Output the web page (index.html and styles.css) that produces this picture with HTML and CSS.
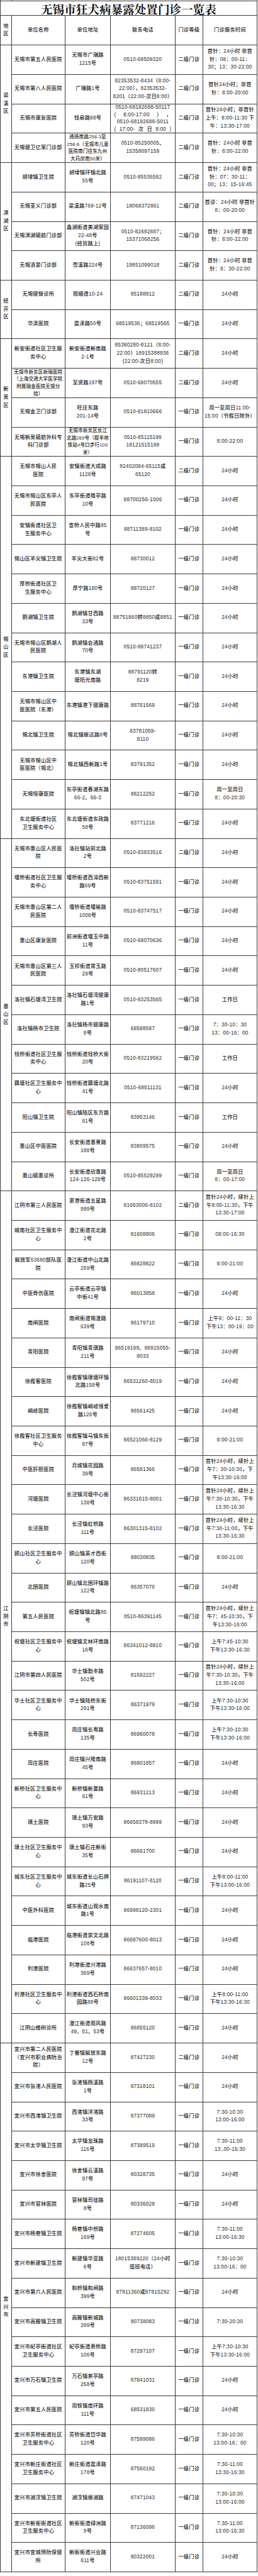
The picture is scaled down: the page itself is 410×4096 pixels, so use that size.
FILE: index.html
```html
<!DOCTYPE html>
<html lang="zh-CN">
<head>
<meta charset="utf-8">
<title>无锡市狂犬病暴露处置门诊一览表</title>
<link rel="stylesheet" href="styles.css">
</head>
<body>
<div class="tbl">
<div class="s"></div><div class="s n"></div><div class="s"></div><div class="s"></div><div class="s n"></div><div class="s"></div>
<div class="title">无锡市狂犬病暴露处置门诊一览表</div>
<div class="c rg">地<br>区</div><div class="c">单位名称</div><div class="c">单位地址</div><div class="c">联系电话</div><div class="c">门诊等级</div><div class="c">门诊服务时间</div>

<div class="c rg r4">梁<br>溪<br>区</div>
<div class="c">无锡市第五人民医院</div><div class="c">无锡市广瑞路<br>1215号</div><div class="c">0510-68509320</div><div class="c">二级门诊</div><div class="c">首针：24小时 非首<br>针：08：00-11：<br>30；13：30-22:00</div>
<div class="c">无锡市第八人民医院</div><div class="c">广瑞路1号</div><div class="c">82353532-8434（8:00-<br>22:00），82353532-<br>8201（22:00-次日8:00）</div><div class="c">二级门诊</div><div class="c">首针24小时；非首<br>针：8:00-20:00</div>
<div class="c">无锡市康复医院</div><div class="c">钱皋路88号</div><div class="c"><div class="ph4"><span class="ln">0510-68182688-50117</span><span class="ln j"><i>(</i><i>8:00-17:00</i><i>)</i><i>，</i></span><span class="ln">0510-68182688-5011</span><span class="ln j"><i>(</i><i>17:00-</i><i>次</i><i>日</i><i>8:00</i><i>)</i></span></div></div><div class="c">二级门诊</div><div class="c">首针24小时；非首针<br>上午：8:00-11:30 下<br>午：13:30-17:00</div>
<div class="c">无锡健卫亿家门诊部</div><div class="c sm">通扬南路258-3至<br>258-6（无锡市儿童<br>医院南门往东九州<br>大药房南50米）</div><div class="c">0510-85250005、<br>15358097159</div><div class="c">二级门诊</div><div class="c">首针：24小时 非首<br>针：8:00-22:00</div>

<div class="c rg r4">滨<br>湖<br>区</div>
<div class="c">胡埭镇卫生院</div><div class="c">胡埭镇环镇北路<br>55号</div><div class="c">0510-85536582</div><div class="c">二级门诊</div><div class="c">首针：24小时 非首<br>针：07：30-11：<br>00；13：15-16:45</div>
<div class="c">无锡荃义门诊部</div><div class="c">梁溪路769-12号</div><div class="c">18068372861</div><div class="c">二级门诊</div><div class="c">首诊：24小时 非首针<br>8：00-20:00</div>
<div class="c">无锡滨湖毓舫门诊部</div><div class="c">蠡湖街道美湖家园<br>22-48号<br>(经贸路上)</div><div class="c">0510-82692887；<br>15371068256</div><div class="c">二级门诊</div><div class="c">首针：24小时 非首<br>针：8:00-22:00</div>
<div class="c">无锡清晏门诊部</div><div class="c">雪溪路224号</div><div class="c">19851099018</div><div class="c">二级门诊</div><div class="c">首针：24小时 非首<br>针：8：30-22:00</div>

<div class="c rg r2">经<br>开<br>区</div>
<div class="c">无锡健慷诊所</div><div class="c">观顺道10-24</div><div class="c">85188812</div><div class="c">二级门诊</div><div class="c">24小时</div>
<div class="c">华清医院</div><div class="c">震泽路50号</div><div class="c">68519536；68519565</div><div class="c">一级门诊</div><div class="c">24小时</div>

<div class="c rg r4">新<br>吴<br>区</div>
<div class="c">新安街道社区卫生服<br>务中心</div><div class="c">新安街道新南路<br>2-1号</div><div class="c">85380280-8121（8:00-<br>22:00）18915388936<br>(22:00-次日8:00)</div><div class="c">二级门诊</div><div class="c">24小时</div>
<div class="c sm">无锡市新吴区新瑞医院<br>（上海交通大学医学院<br>附属瑞金医院无锡分<br>院）</div><div class="c">至贤路197号</div><div class="c">0510-68070555</div><div class="c">二级门诊</div><div class="c">24小时</div>
<div class="c">无锡金卫门诊部</div><div class="c">旺庄东路<br>201-14号</div><div class="c">0510-81810666</div><div class="c">一级门诊</div><div class="c">周一至周日11:00-<br>15:00（节假日除外）</div>
<div class="c">无锡新吴毓舫外科专<br>科门诊部</div><div class="c sm">无锡市新吴区长江<br>北路269号（叙丰地<br>铁站4号口步行100<br>米）</div><div class="c">0510-85115199<br>18121515199</div><div class="c">一级门诊</div><div class="c">8:00-22:00</div>

<div class="c rg r13">锡<br>山<br>区</div>
<div class="c">无锡市锡山人民<br>医院</div><div class="c">安镇街道大成路<br>1128号</div><div class="c">82402084-65115或<br>65120</div><div class="c">二级门诊</div><div class="c">24小时</div>
<div class="c">无锡市锡山区东亭人<br>民医院</div><div class="c">东亭街道隆亭路<br>10号</div><div class="c">88700256-1006</div><div class="c">一级门诊</div><div class="c">24小时</div>
<div class="c">安镇街道社区卫<br>生服务中心</div><div class="c">查桥人民中路85<br>号</div><div class="c">88711389-8102</div><div class="c">一级门诊</div><div class="c">24小时</div>
<div class="c">锡山区羊尖镇卫生院</div><div class="c">羊尖大街82号</div><div class="c">88730012</div><div class="c">一级门诊</div><div class="c">24小时</div>
<div class="c">厚桥街道社区卫<br>生服务中心</div><div class="c">厚宁路180号</div><div class="c">88720127</div><div class="c">一级门诊</div><div class="c">24小时</div>
<div class="c">鹅湖镇卫生院</div><div class="c">鹅湖镇甘西路<br>33号</div><div class="c">88751860转8850或8851</div><div class="c">一级门诊</div><div class="c">24小时</div>
<div class="c">无锡市锡山区鹅湖人<br>民医院</div><div class="c">鹅湖镇会通路<br>70号</div><div class="c">0510-88741237</div><div class="c">一级门诊</div><div class="c">24小时</div>
<div class="c">东港镇卫生院</div><div class="c">东港镇东湖<br>塘阳光南路</div><div class="c">88791120转<br>8219</div><div class="c">一级门诊</div><div class="c">24小时</div>
<div class="c">无锡市锡山区中<br>医医院（东港）</div><div class="c">东港镇港下健康路</div><div class="c">88761569</div><div class="c">一级门诊</div><div class="c">24小时</div>
<div class="c">锡北镇卫生院</div><div class="c">锡北镇振达路8号</div><div class="c">83781059-<br>8110</div><div class="c">一级门诊</div><div class="c">24小时</div>
<div class="c">无锡市锡山区中<br>医医院（锡北）</div><div class="c">锡北镇西新路1号</div><div class="c">83791352</div><div class="c">一级门诊</div><div class="c">24小时</div>
<div class="c">无锡恒康医院</div><div class="c">东亭街道春湖东路<br>66-2、66-3</div><div class="c">88212252</div><div class="c">一级门诊</div><div class="c">周一至周日<br>8：00-20:30</div>
<div class="c">东北塘街道社区<br>卫生服务中心</div><div class="c">东北塘街道东政路<br>58号</div><div class="c">83771216</div><div class="c">一级门诊</div><div class="c">24小时</div>

<div class="c rg r12">惠<br>山<br>区</div>
<div class="c">无锡市惠山区人民医<br>院</div><div class="c">洛社镇站前北路<br>2号</div><div class="c">0510-83833516</div><div class="c">二级门诊</div><div class="c">24小时</div>
<div class="c">堰桥街道社区卫生服<br>务中心</div><div class="c">堰桥街道西漳西新<br>路69号</div><div class="c">0510-83751591</div><div class="c">一级门诊</div><div class="c">24小时</div>
<div class="c">无锡市惠山区第二人<br>民医院</div><div class="c">堰桥街道堰裕路<br>1008号</div><div class="c">0510-83747517</div><div class="c">一级门诊</div><div class="c">24小时</div>
<div class="c">惠山区康复医院</div><div class="c">前洲街道堰玉中路<br>11号</div><div class="c">0510-68070636</div><div class="c">一级门诊</div><div class="c">24小时</div>
<div class="c">无锡市惠山区第三人<br>民医院</div><div class="c">玉祁街道常玉路<br>29号</div><div class="c">0510-80517607</div><div class="c">一级门诊</div><div class="c">24小时</div>
<div class="c">洛社镇石塘湾卫生院</div><div class="c">洛社镇石塘湾健康<br>路1号</div><div class="c">0510-83253565</div><div class="c">一级门诊</div><div class="c">工作日</div>
<div class="c">洛社镇杨市卫生院</div><div class="c">洛社镇杨市健康路<br>8号</div><div class="c">68588587</div><div class="c">一级门诊</div><div class="c">7：30-10：30<br>13：00-16：00</div>
<div class="c">钱桥街道社区卫生服<br>务中心</div><div class="c">钱桥街道钱桥大街<br>20号</div><div class="c">0510-83219562</div><div class="c">一级门诊</div><div class="c">工作日</div>
<div class="c">藕塘社区卫生服务中<br>心</div><div class="c">钱桥街道藕塘北路<br>41号</div><div class="c">0510-68511131</div><div class="c">一级门诊</div><div class="c">24小时</div>
<div class="c">阳山镇卫生院</div><div class="c">阳山镇陆区东方路<br>61号</div><div class="c">83953146</div><div class="c">一级门诊</div><div class="c">工作日</div>
<div class="c">惠山区中医医院</div><div class="c">长安街道惠景路<br>188号</div><div class="c">83809575</div><div class="c">一级门诊</div><div class="c">24小时</div>
<div class="c">惠山毓惠诊所</div><div class="c">长安街道欣惠路<br>124-126-128号</div><div class="c">0510-85529299</div><div class="c">一级门诊</div><div class="c">周一至周日<br>8：00-17:00</div>

<div class="c rg r29">江<br>阴<br>市</div>
<div class="c">江阴市第三人民医院</div><div class="c">夏港街道五星路<br>999号</div><div class="c">81663006-8102</div><div class="c">二级门诊</div><div class="c">首针24小时，续针上<br>午8:00-11:30，下午<br>13:30-17:00</div>
<div class="c">城南社区卫生服务中<br>心</div><div class="c">澄江街道花北路<br>2号</div><div class="c">81608806</div><div class="c">一级门诊</div><div class="c">08:00-16:30</div>
<div class="c">解放军63680部队医<br>院</div><div class="c">澄江街道中山北路<br>269号</div><div class="c">86828822</div><div class="c">一级门诊</div><div class="c">8:00-21:00</div>
<div class="c">中医骨伤医院</div><div class="c">云亭街道云亭镇<br>中街41号</div><div class="c">86013858</div><div class="c">一级门诊</div><div class="c">24小时</div>
<div class="c">南闸医院</div><div class="c">南闸街道锡澄路<br>639号</div><div class="c">86179710</div><div class="c">一级门诊</div><div class="c">上午9：00-11：30<br>下午13：00-19：00</div>
<div class="c">青阳医院</div><div class="c">青阳镇青璜路<br>211号</div><div class="c">86519199、86915055-<br>8033</div><div class="c">一级门诊</div><div class="c">24小时</div>
<div class="c">徐霞客医院</div><div class="c">徐霞客镇璜塘环镇<br>北路158号</div><div class="c">86531260-8019</div><div class="c">一级门诊</div><div class="c">24小时</div>
<div class="c">峭岐医院</div><div class="c">徐霞客镇峭岐博爱<br>路126号</div><div class="c">86561425</div><div class="c">一级门诊</div><div class="c">24小时</div>
<div class="c">徐霞客社区卫生服务<br>中心</div><div class="c">徐霞客镇马镇东街<br>87号</div><div class="c">86521066-8129</div><div class="c">一级门诊</div><div class="c">8:00-21:00</div>
<div class="c">中医肝胆医院</div><div class="c">月城镇花园路<br>39号</div><div class="c">86581366</div><div class="c">一级门诊</div><div class="c">首针24小时，续针上<br>午7：30-10:30，下<br>午13:30-16:00</div>
<div class="c">河塘医院</div><div class="c">长泾镇河塘中心街<br>138号</div><div class="c">86331615-8001</div><div class="c">一级门诊</div><div class="c">首针24小时，续针上<br>午7:30-10:30，下午<br>13:30-16:30</div>
<div class="c">长泾医院</div><div class="c">长泾镇虹桥路<br>111号</div><div class="c">86301315-8102</div><div class="c">一级门诊</div><div class="c">首针24小时，续针上<br>午7:30-11:00，下午<br>13:30-16:30</div>
<div class="c">顾山社区卫生服务中<br>心</div><div class="c">顾山镇英才西街<br>120号</div><div class="c">88030835</div><div class="c">一级门诊</div><div class="c">8:00-21:00</div>
<div class="c">北国医院</div><div class="c">顾山镇北国环镇路<br>122号</div><div class="c">86357076</div><div class="c">一级门诊</div><div class="c">24小时</div>
<div class="c">第五人民医院</div><div class="c">祝塘镇镇北路85<br>号</div><div class="c">0510-86391145</div><div class="c">一级门诊</div><div class="c">首针24小时，续针上<br>午7：45-10:30，下<br>午13:30-16:00</div>
<div class="c">祝塘社区卫生服务中<br>心</div><div class="c">祝塘镇文林环南路<br>16号</div><div class="c">86341012-8810</div><div class="c">一级门诊</div><div class="c">上午7:45-10:30<br>下午13:30-16:30</div>
<div class="c">江阴市第四人民医院</div><div class="c">华士镇勤丰路<br>502号</div><div class="c">81692227</div><div class="c">一级门诊</div><div class="c">首针24小时，续针上<br>午7:30-10:30，下午<br>13:30-16:00</div>
<div class="c">华士社区卫生服务中<br>心</div><div class="c">华士镇陆桥东街<br>291号</div><div class="c">86371979</div><div class="c">一级门诊</div><div class="c">上午7:30-10:30<br>下午13:30-16:00</div>
<div class="c">长寿医院</div><div class="c">周庄镇长寿路<br>135号</div><div class="c">86960078</div><div class="c">一级门诊</div><div class="c">上午7:30-10:30<br>下午13:30-16:00</div>
<div class="c">周庄医院</div><div class="c">周庄镇兴隆南路<br>45号</div><div class="c">86901857</div><div class="c">一级门诊</div><div class="c">24小时</div>
<div class="c">新桥社区卫生服务中<br>心</div><div class="c">新桥镇新蕾路<br>61号</div><div class="c">86931213</div><div class="c">一级门诊</div><div class="c">24小时</div>
<div class="c">璜土医院</div><div class="c">璜土镇万安路<br>93号</div><div class="c">86658378-8999</div><div class="c">一级门诊</div><div class="c">24小时</div>
<div class="c">璜土社区卫生服务中<br>心</div><div class="c">璜土镇石庄新街<br>35号</div><div class="c">86661700</div><div class="c">一级门诊</div><div class="c">24小时</div>
<div class="c">城东社区卫生服务中<br>心</div><div class="c">城东街道长山石牌<br>路25号</div><div class="c">86191107-8120</div><div class="c">一级门诊</div><div class="c">上午8:00-11:00<br>下午13:00-16:00</div>
<div class="c">中医外科医院</div><div class="c">城东街道山观水南<br>路1号</div><div class="c">86998120-2301</div><div class="c">一级门诊</div><div class="c">24小时</div>
<div class="c">临港医院</div><div class="c">临港街道崇文北路<br>108号</div><div class="c">86687600-8013</div><div class="c">一级门诊</div><div class="c">24小时</div>
<div class="c">利港医院</div><div class="c">利港街道兴港路<br>369号</div><div class="c">86637657-8010</div><div class="c">一级门诊</div><div class="c">24小时</div>
<div class="c">利港社区卫生服务中<br>心</div><div class="c">利港街道西石桥南<br>园路88号</div><div class="c">86601339-8033</div><div class="c">一级门诊</div><div class="c">上午8:00-11:00<br>下午13:30-16:30</div>
<div class="c">江阴山楂树诊所</div><div class="c">澄江街道观风路<br>49、51、53号</div><div class="c">86855120</div><div class="c">一级门诊</div><div class="c">24小时</div>

<div class="c rg r18">宜<br>兴<br>市</div>
<div class="c">宜兴市第二人民医院<br>（宜兴市职业病防治<br>院）</div><div class="c">丁蜀镇解放东路<br>12号</div><div class="c">87427230</div><div class="c">二级门诊</div><div class="c">24小时</div>
<div class="c">宜兴市张渚人民医院</div><div class="c">张渚镇桃溪路<br>1号</div><div class="c">87318101</div><div class="c">一级门诊</div><div class="c">24小时</div>
<div class="c">宜兴市西渚镇卫生院</div><div class="c">西渚镇洋渚路<br>33号</div><div class="c">87377089</div><div class="c">一级门诊</div><div class="c">7:30-10:30<br>13:00-16:00</div>
<div class="c">宜兴市太华镇卫生院</div><div class="c">太华镇龙珠路<br>116号</div><div class="c">87389519</div><div class="c">一级门诊</div><div class="c">7:30-11:00<br>13:,00-16:30</div>
<div class="c">宜兴市徐舍医院</div><div class="c">徐舍镇云溪路<br>97号</div><div class="c">80328735</div><div class="c">一级门诊</div><div class="c">24小时</div>
<div class="c">宜兴市官林医院</div><div class="c">官林镇司徒路<br>8号</div><div class="c">80336029</div><div class="c">一级门诊</div><div class="c">24小时</div>
<div class="c">宜兴市杨巷镇卫生院</div><div class="c">杨巷镇中桥路<br>169号</div><div class="c">87274605</div><div class="c">一级门诊</div><div class="c">7:30-11:00<br>13:00-16:30</div>
<div class="c">宜兴市新建镇卫生院</div><div class="c">新建镇华亚路<br>6号</div><div class="c">18015389220（24小时<br>值班电话）</div><div class="c">一级门诊</div><div class="c">7:30-10:30<br>13:00-16：00</div>
<div class="c">宜兴市第六人民医院</div><div class="c">和桥镇和闸路<br>399号</div><div class="c">87811360或87815292</div><div class="c">一级门诊</div><div class="c">24小时</div>
<div class="c">宜兴市高塍镇卫生院</div><div class="c">高塍镇新城路<br>299号</div><div class="c">80738083</div><div class="c">一级门诊</div><div class="c">7:30-20:30</div>
<div class="c">宜兴市屺亭街道社区<br>卫生服务中心</div><div class="c">屺亭街道表桥路<br>106号</div><div class="c">87297107</div><div class="c">一级门诊</div><div class="c">上午7:30-10:30<br>下午13:30-16:00</div>
<div class="c">宜兴市万石镇卫生院</div><div class="c">万石镇茶亭路<br>258号</div><div class="c">87841031</div><div class="c">一级门诊</div><div class="c">24小时</div>
<div class="c">宜兴市第五人民医院</div><div class="c">周铁镇南环路<br>111号</div><div class="c">68531830</div><div class="c">一级门诊</div><div class="c">24小时</div>
<div class="c">宜兴市芳桥街道社区<br>卫生服务中心</div><div class="c">芳桥街道岱华路<br>120号</div><div class="c">87589086</div><div class="c">一级门诊</div><div class="c">7:30-10:30<br>13:00-16：00</div>
<div class="c">宜兴市新庄街道社区<br>卫生服务中心</div><div class="c">新庄街道震泽路<br>178号</div><div class="c">87560192</div><div class="c">一级门诊</div><div class="c">7:30-11:00<br>13:30-16:30</div>
<div class="c">宜兴市湖汊镇卫生院</div><div class="c">湖汊镇振湖路</div><div class="c">87471043</div><div class="c">一级门诊</div><div class="c">7:30-10:30<br>13:00-16:00</div>
<div class="c">宜兴市新街街道社区<br>卫生服务中心</div><div class="c">新街街道绿洲路<br>9号</div><div class="c">87136096</div><div class="c">一级门诊</div><div class="c">7:30-11:00<br>13:00-16:30</div>
<div class="c">宜兴市宜城预防保健<br>所</div><div class="c">新街街道兴业路<br>611号</div><div class="c">80322001</div><div class="c">一级门诊</div><div class="c">24小时</div>
</div>
</body>
</html>
```

FILE: styles.css
```css
* {
  box-sizing: border-box;
  margin: 0;
  padding: 0;
}

html,
body {
  background: #ffffff;
}

body {
  margin: 0;
  font-family: "Liberation Sans", "Noto Sans CJK SC", sans-serif;
  color: #262626;
}

.tbl {
  display: grid;
  width: 409px;
  grid-template-columns: 17.7px 85.2px 72.2px 102.7px 44.1px 86.1px;
  grid-template-rows: 1.3px 24px 46.9px;
  grid-auto-rows: 46.72px;
  border-left: 1px solid #3a3a3a;
}

.s {
  border-right: 1px solid #555555;
}

.s.n {
  border-right: none;
}

.title {
  grid-column: 1 / -1;
  display: flex;
  align-items: center;
  justify-content: center;
  padding-top: 2px;
  border-top: 1px solid #3a3a3a;
  border-right: 1px solid #3a3a3a;
  border-bottom: 1px solid #3a3a3a;
  font-family: "Noto Serif CJK SC", "Noto Sans CJK SC", serif;
  font-weight: 700;
  font-size: 18.5px;
  letter-spacing: 0.1px;
  color: #111111;
  white-space: nowrap;
}

.c {
  display: flex;
  align-items: center;
  justify-content: center;
  text-align: center;
  white-space: nowrap;
  border-right: 1px solid #3a3a3a;
  border-bottom: 1px solid #3a3a3a;
  font-size: 8.2px;
  letter-spacing: 0.25px;
  line-height: 12.8px;
  font-weight: 500;
}

.c.sm {
  font-size: 7.5px;
  letter-spacing: 0.2px;
  line-height: 11.6px;
}

.rg {
  line-height: 12.6px;
  letter-spacing: 0;
}

.r2 { grid-row: span 2; }
.r4 { grid-row: span 4; }
.r12 { grid-row: span 12; }
.r13 { grid-row: span 13; }
.r18 { grid-row: span 18; }
.r29 { grid-row: span 29; }

.ph4 {
  width: 91px;
  line-height: 11.7px;
}

.ln {
  display: block;
  text-align: center;
}

.ln.j {
  display: flex;
  justify-content: space-between;
}

.ln i {
  font-style: normal;
}
```
